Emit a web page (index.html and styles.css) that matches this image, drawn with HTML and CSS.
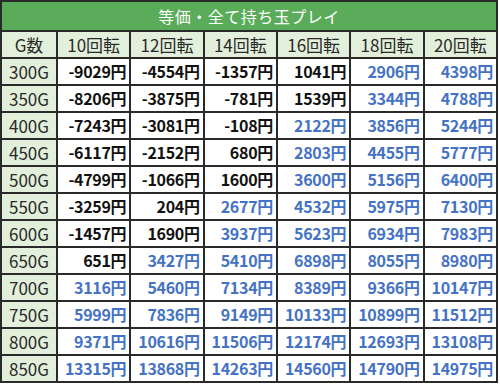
FILE: index.html
```html
<!DOCTYPE html>
<html lang="ja">
<head>
<meta charset="utf-8">
<link rel="stylesheet" href="styles.css">
</head>
<body>
<table class="tbl">
  <colgroup>
    <col class="c-g">
    <col class="c-v"><col class="c-v"><col class="c-v"><col class="c-v"><col class="c-v"><col class="c-v">
  </colgroup>
  <thead>
    <tr><th class="title" colspan="7">等価・全て持ち玉プレイ</th></tr>
    <tr class="head">
      <th>G数</th><th>10回転</th><th>12回転</th><th>14回転</th><th>16回転</th><th>18回転</th><th>20回転</th>
    </tr>
  </thead>
  <tbody>
    <tr><th>300G</th><td>-9029円</td><td>-4554円</td><td>-1357円</td><td>1041円</td><td class="b">2906円</td><td class="b">4398円</td></tr>
    <tr><th>350G</th><td>-8206円</td><td>-3875円</td><td>-781円</td><td>1539円</td><td class="b">3344円</td><td class="b">4788円</td></tr>
    <tr><th>400G</th><td>-7243円</td><td>-3081円</td><td>-108円</td><td class="b">2122円</td><td class="b">3856円</td><td class="b">5244円</td></tr>
    <tr><th>450G</th><td>-6117円</td><td>-2152円</td><td>680円</td><td class="b">2803円</td><td class="b">4455円</td><td class="b">5777円</td></tr>
    <tr><th>500G</th><td>-4799円</td><td>-1066円</td><td>1600円</td><td class="b">3600円</td><td class="b">5156円</td><td class="b">6400円</td></tr>
    <tr><th>550G</th><td>-3259円</td><td>204円</td><td class="b">2677円</td><td class="b">4532円</td><td class="b">5975円</td><td class="b">7130円</td></tr>
    <tr><th>600G</th><td>-1457円</td><td>1690円</td><td class="b">3937円</td><td class="b">5623円</td><td class="b">6934円</td><td class="b">7983円</td></tr>
    <tr><th>650G</th><td>651円</td><td class="b">3427円</td><td class="b">5410円</td><td class="b">6898円</td><td class="b">8055円</td><td class="b">8980円</td></tr>
    <tr><th>700G</th><td class="b">3116円</td><td class="b">5460円</td><td class="b">7134円</td><td class="b">8389円</td><td class="b">9366円</td><td class="b">10147円</td></tr>
    <tr><th>750G</th><td class="b">5999円</td><td class="b">7836円</td><td class="b">9149円</td><td class="b">10133円</td><td class="b">10899円</td><td class="b">11512円</td></tr>
    <tr><th>800G</th><td class="b">9371円</td><td class="b">10616円</td><td class="b">11506円</td><td class="b">12174円</td><td class="b">12693円</td><td class="b">13108円</td></tr>
    <tr><th>850G</th><td class="b">13315円</td><td class="b">13868円</td><td class="b">14263円</td><td class="b">14560円</td><td class="b">14790円</td><td class="b">14975円</td></tr>
  </tbody>
</table>
</body>
</html>
```
FILE: styles.css
```css
html, body {
  margin: 0;
  padding: 0;
  background: #fff;
}
.tbl {
  width: 498px;
  border-collapse: collapse;
  table-layout: fixed;
  border: 2px solid #1a1a1a;
  font-family: "Noto Sans CJK JP", "Noto Sans", sans-serif;
  font-size: 16px;
  color: #222;
}
.c-g { width: 56px; }
.tbl th, .tbl td {
  border: 2px solid #2a2a2a;
  height: 25px;
  padding: 0;
  line-height: 25px;
  white-space: nowrap;
  overflow: hidden;
}
.tbl th {
  font-weight: 400;
  font-size: 17px;
  background: #e2efda;
  text-align: center;
  color: #2a2a2a;
}
.tbl th.title {
  background: #5aab5a;
  color: #fff;
  font-size: 16px;
  height: 28px;
  line-height: 28px;
  letter-spacing: 0.5px;
}
.tbl td {
  text-align: right;
  padding-right: 3px;
  font-weight: 700;
  color: #111;
  letter-spacing: -0.3px;
  background: #fff;
}
.tbl td.b {
  color: #4472c4;
}
```
